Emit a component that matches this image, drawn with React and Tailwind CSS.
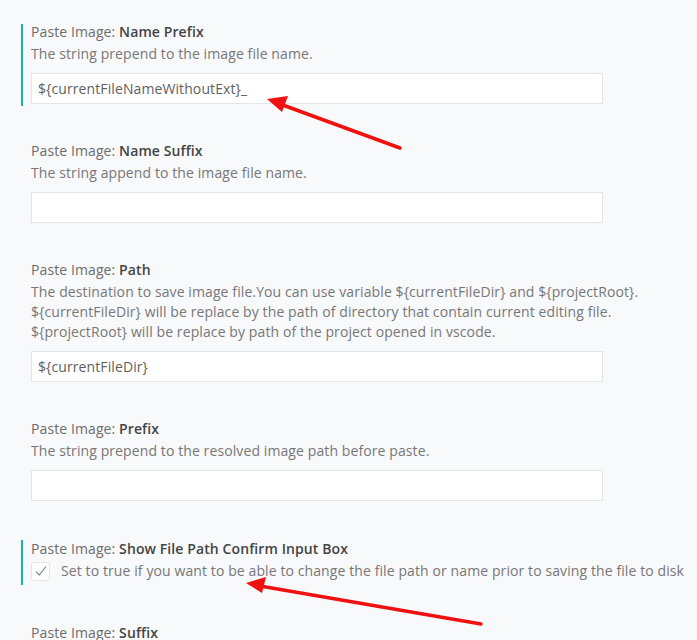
export default function App() {
  const sections = [
    { id: 'np', name: 'Name Prefix', desc: ['The string prepend to the image file name.'], value: '${currentFileNameWithoutExt}_', active: true },
    { id: 'ns', name: 'Name Suffix', desc: ['The string append to the image file name.'], value: '' },
    {
      id: 'path',
      name: 'Path',
      desc: [
        'The destination to save image file.You can use variable ${currentFileDir} and ${projectRoot}.',
        '${currentFileDir} will be replace by the path of directory that contain current editing file.',
        '${projectRoot} will be replace by path of the project opened in vscode.',
      ],
      value: '${currentFileDir}',
    },
    { id: 'pre', name: 'Prefix', desc: ['The string prepend to the resolved image path before paste.'], value: '' },
  ];

  return (
    <div className="relative h-[640px] w-[697px] overflow-hidden bg-[#f8f9fb] pl-[21px] pt-[24px] font-['Open_Sans',sans-serif] text-[14px] tracking-[0.1px]">
      {sections.map((s) => (
        <div key={s.id} className={`mb-[37px] border-l-2 pb-[2px] pl-[8px] ${s.active ? 'border-[#1bb3a9]' : 'border-transparent'}`}>
          <div className="h-[20px] leading-[16px] text-[#6d6d6d]">
            Paste Image: <span className="font-semibold text-[#444444]">{s.name}</span>
          </div>
          <div className="leading-[20px] text-[#777777]">
            {s.desc.map((d) => (
              <div key={d}>{d}</div>
            ))}
          </div>
          <div className="mt-[9px] flex h-[31px] w-[572px] items-center border border-[#e3e4e8] bg-white px-[6px] text-[#5f5f5f]">
            {s.value}
          </div>
        </div>
      ))}

      <div className="mb-[40px] border-l-2 border-[#1bb3a9] pb-[3px] pl-[8px]">
        <div className="h-[20px] pt-[1px] leading-[16px] text-[#6d6d6d]">
          Paste Image: <span className="font-semibold text-[#444444]">Show File Path Confirm Input Box</span>
        </div>
        <div className="flex items-center gap-[11px]">
          <div className="flex h-[19px] w-[19px] shrink-0 items-center justify-center rounded-[3px] border border-[#e3e4e8] bg-white">
            <svg width="14" height="14" viewBox="0 0 14 14" fill="none">
              <path d="M2 7.5 L5.2 11 L12 2.5" stroke="#6a7a8c" strokeWidth="1.1" />
            </svg>
          </div>
          <span className="whitespace-nowrap leading-[22px] text-[#777777]">
            Set to true if you want to be able to change the file path or name prior to saving the file to disk
          </span>
        </div>
      </div>

      <div className="pl-[10px]">
        <div className="leading-[16px] text-[#6d6d6d]">
          Paste Image: <span className="font-semibold text-[#444444]">Suffix</span>
        </div>
      </div>

      <svg className="pointer-events-none absolute left-0 top-0" width="697" height="640">
        <line x1="400" y1="148" x2="280" y2="104" stroke="#f01010" strokeWidth="3.5" strokeLinecap="round" />
        <polygon points="267,99 288,96 282,112" fill="#f01010" />
        <line x1="481" y1="624" x2="260" y2="586" stroke="#f01010" strokeWidth="3.5" strokeLinecap="round" />
        <polygon points="246,583 266,577 262,593" fill="#f01010" />
      </svg>
    </div>
  );
}
